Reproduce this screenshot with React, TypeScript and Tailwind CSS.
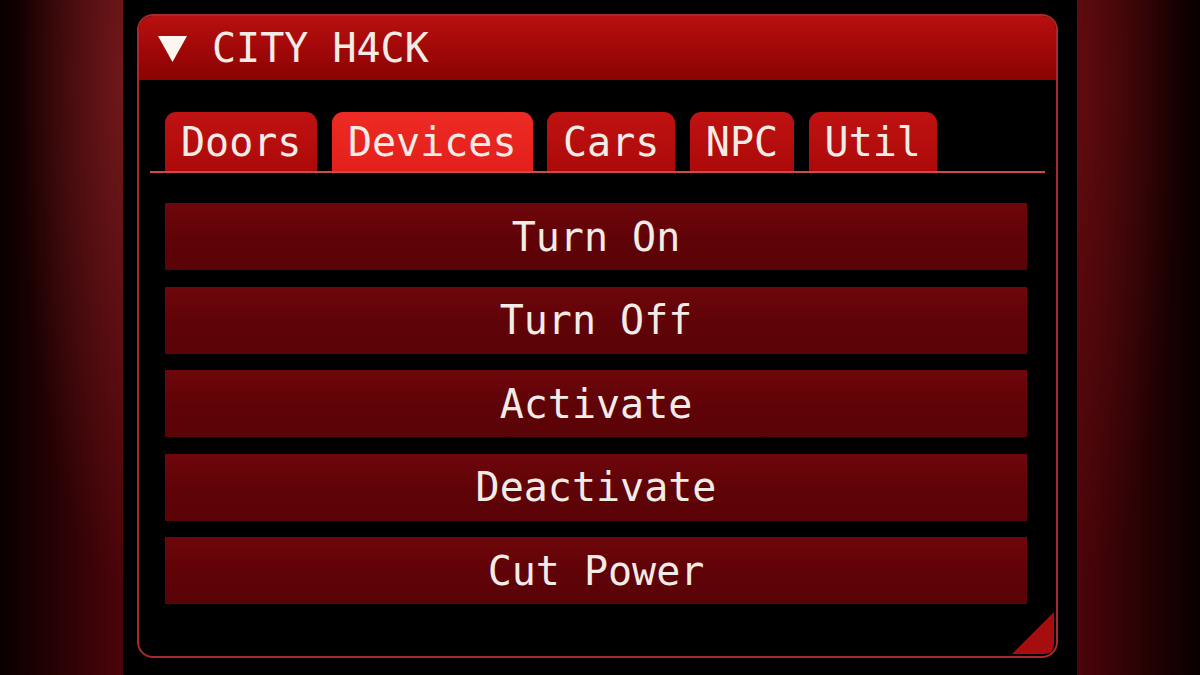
import React from "react";

const font = { fontFamily: '"DejaVu Sans Mono", "Liberation Mono", monospace' };

const tabs = ["Doors", "Devices", "Cars", "NPC", "Util"];
const actions = ["Turn On", "Turn Off", "Activate", "Deactivate", "Cut Power"];

export default function App() {
  return (
    <div
      className="w-[1200px] h-[675px] flex bg-black overflow-hidden text-[#f3ece6]"
      style={font}
    >
      <div className="w-[123px] h-full relative bg-gradient-to-r from-[#0a0000] via-[#2a0205] to-[#4d0409]">
        <div className="absolute inset-0 bg-[radial-gradient(ellipse_at_100%_12%,rgba(140,40,40,0.55),rgba(0,0,0,0)_60%)]" />
      </div>

      <div className="flex-1 h-full bg-black pl-[14px] pr-[19px] pt-[14px] pb-[17px]">
        <div className="relative h-full rounded-[16px] border-2 border-[#a82a2a] bg-black overflow-hidden flex flex-col">
          <div className="h-[64px] shrink-0 flex items-center pl-[18px] gap-[24px] bg-gradient-to-b from-[#b71010] via-[#a20808] to-[#8a0303]">
            <svg width="31" height="29" viewBox="0 0 31 29">
              <polygon points="1,2 30,2 15.5,28" fill="#fbf6f0" />
            </svg>
            <span className="text-[40px] leading-none">CITY H4CK</span>
          </div>

          <div className="flex-1 px-[11px] pt-[32px] flex flex-col">
            <div className="flex items-end gap-[14.5px] pl-[15px]">
              {tabs.map((t) => (
                <div
                  key={t}
                  className={
                    t === "Devices"
                      ? "h-[59px] px-[16px] rounded-t-[11px] flex items-center text-[40px] leading-none bg-gradient-to-b from-[#ee2a24] to-[#e31f1b]"
                      : "h-[59px] px-[16px] rounded-t-[11px] flex items-center text-[40px] leading-none bg-gradient-to-b from-[#c01212] to-[#ac0909]"
                  }
                >
                  {t}
                </div>
              ))}
            </div>
            <div className="h-[2px] bg-[#cf4a46]" />

            <div className="mt-[30px] pl-[15px] pr-[18px] flex flex-col gap-[16.5px]">
              {actions.map((a) => (
                <div
                  key={a}
                  className="h-[67px] flex items-center justify-center text-[40px] leading-none bg-gradient-to-b from-[#6e070b] via-[#600308] to-[#5a0307]"
                >
                  {a}
                </div>
              ))}
            </div>
          </div>

          <svg
            className="absolute right-[2px] bottom-[2px]"
            width="42"
            height="42"
            viewBox="0 0 42 42"
          >
            <path d="M0,42 L42,0 L42,32 Q42,42 32,42 Z" fill="#a50d0f" />
          </svg>
        </div>
      </div>

      <div className="w-[123px] h-full relative bg-gradient-to-l from-[#0a0000] via-[#2a0205] to-[#4d0409]">
        <div className="absolute inset-0 bg-[radial-gradient(ellipse_at_0%_12%,rgba(120,20,20,0.45),rgba(0,0,0,0)_60%)]" />
      </div>
    </div>
  );
}
